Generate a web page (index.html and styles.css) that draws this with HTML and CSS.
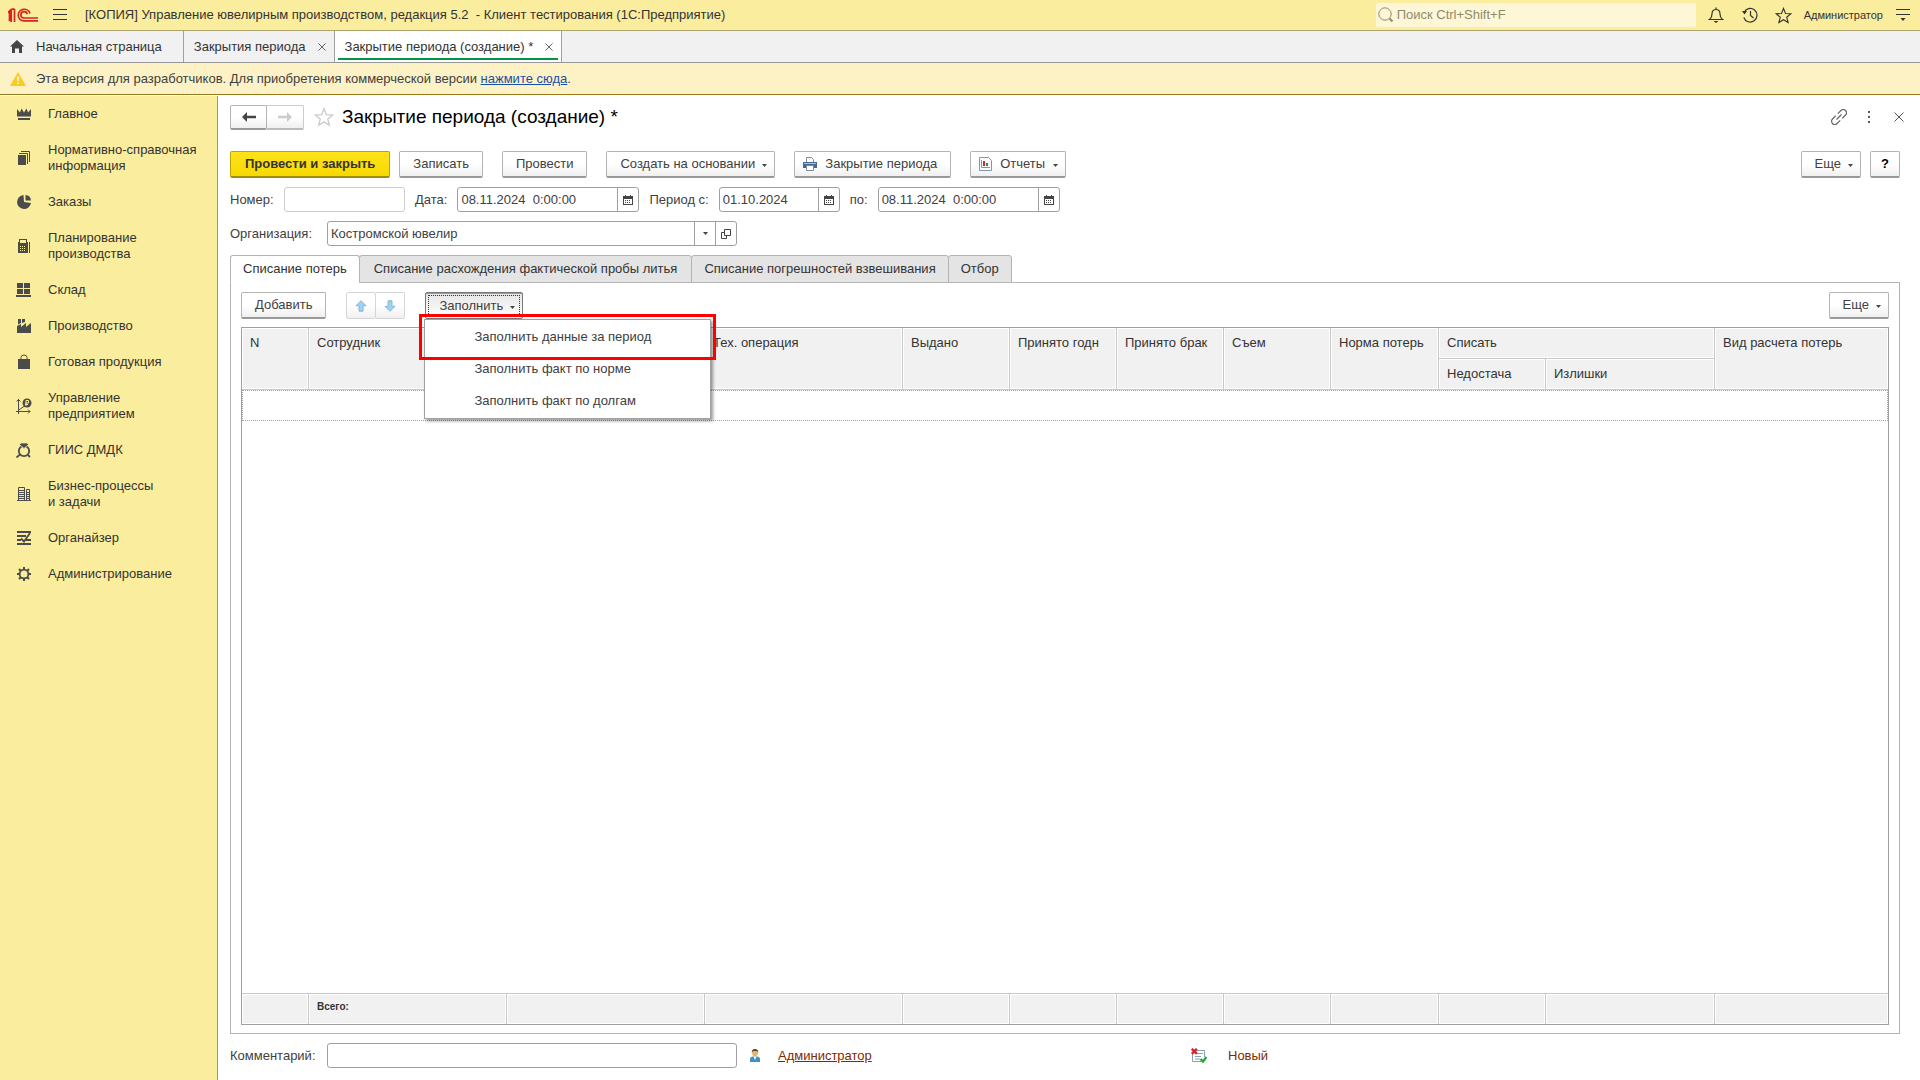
FILE: index.html
```html
<!DOCTYPE html>
<html lang="ru">
<head>
<meta charset="utf-8">
<title>Закрытие периода (создание)</title>
<meta name="viewport" content="width=device-width, initial-scale=1">
<link rel="stylesheet" href="styles.css">
</head>
<body>
<svg class="sprite" aria-hidden="true">
  <symbol id="calendar" viewBox="0 0 10 10"><path fill="#444" fill-rule="evenodd" d="M0 1h2V0h1v1h4V0h1v1h2v9H0zM1 4v5h8V4z"/><path fill="#444" d="M2 5h1v1H2zM4 5h1v1H4zM6 5h1v1H6zM2 7h1v1H2zM4 7h1v1H4zM6 7h1v1H6z"/></symbol>
  <symbol id="caret" viewBox="0 0 5 3"><path fill="#444" d="M0 0h5L2.500 3z"/></symbol>
  <symbol id="star" viewBox="0 0 18 18"><path fill="none" stroke="currentColor" stroke-width="1.200" d="M9 1.500l2.100 5.400 5.700.3-4.400 3.700 1.500 5.600L9 13.400l-4.900 3.100 1.500-5.600L1.200 7.200l5.700-.3z"/></symbol>
  <symbol id="close" viewBox="0 0 10 10"><path fill="none" stroke="currentColor" d="M.5.5l9 9M9.500.5l-9 9"/></symbol>
</svg>
<div class="app">
  <header class="titlebar">
    <svg class="logo" viewBox="0 0 30 14"><g fill="none" stroke="#d9231f" stroke-width="1.700"><path d="M0 4.500L3.600 1.200M3.200 1v13M0 4.300h1.500v9M6.500 1v13M3.600 1.200h3"/><path d="M22 5.500A6 5.800 0 1 0 16 12.900H30"/><path d="M19.200 6.200A3.200 3.200 0 1 0 16 10H30"/></g></svg>
    <button class="icon-btn" aria-label="Главное меню"><svg width="14" height="12" viewBox="0 0 14 12"><path stroke="#333" d="M0 .5h14M0 5.500h14M0 10.500h14"/></svg></button>
    <span class="app-title">[КОПИЯ] Управление ювелирным производством, редакция 5.2 &nbsp;- Клиент тестирования (1С:Предприятие)</span>
    <label class="search">
      <svg width="16" height="16" viewBox="0 0 16 16"><g fill="none" stroke="#8f8a6c"><circle cx="7" cy="7" r="6.200"/><path stroke-width="2" d="M11.500 11.500l3 3"/></g></svg>
      <input type="text" placeholder="Поиск Ctrl+Shift+F" aria-label="Поиск">
    </label>
    <button class="icon-btn" aria-label="Уведомления"><svg width="16" height="16" viewBox="0 0 16 16"><path fill="none" stroke="#333" stroke-width="1.200" d="M1.500 12.500c2-1.500 2.500-3 2.500-5.500C4 4 5.500 2.500 8 2.500S12 4 12 7c0 2.500.5 4 2.500 5.500zM8 2.500V.5"/><path fill="#333" d="M5.500 14h5L8 16z"/></svg></button>
    <button class="icon-btn" aria-label="История"><svg width="16" height="16" viewBox="0 0 16 16"><path fill="none" stroke="#333" stroke-width="1.200" d="M2 5.500A6.800 6.800 0 1 1 1.800 10.500M8.500 4v4.500l3 2.500"/><path fill="#333" d="M0 4h5L2.500 7.500z"/></svg></button>
    <button class="icon-btn" aria-label="Избранное"><svg width="17" height="17"><use href="#star"/></svg></button>
    <a class="user" href="#">Администратор</a>
    <button class="icon-btn" aria-label="Сервис"><svg width="14" height="12" viewBox="0 0 14 12"><path stroke="#333" d="M0 .5h14M0 5.500h14"/><path fill="#333" d="M4.500 9h5L7 12z"/></svg></button>
  </header>

  <nav class="windows">
    <div class="window home"><svg width="14" height="13" viewBox="0 0 14 13"><path fill="#444" d="M7 0l7 6.500h-2V13H9V8.500H5V13H2V6.500H0z"/></svg><a href="#">Начальная страница</a></div>
    <div class="window"><a href="#">Закрытия периода</a><button class="tab-close" aria-label="Закрыть"><svg width="8" height="8"><use href="#close"/></svg></button></div>
    <div class="window active"><a href="#">Закрытие периода (создание) *</a><button class="tab-close" aria-label="Закрыть"><svg width="8" height="8"><use href="#close"/></svg></button></div>
  </nav>

  <div class="notice">
    <svg width="16" height="14" viewBox="0 0 16 14"><path fill="#fbcb1e" d="M8 0l8 14H0z"/><path stroke="#fff" stroke-width="1.600" d="M8 4.500v4.500M8 10.500v1.600"/></svg>
    <span>Эта версия для разработчиков. Для приобретения коммерческой версии <a href="#">нажмите сюда</a>.</span>
  </div>

  <div class="body">
    <nav class="sidebar">
      <a href="#"><svg viewBox="0 0 16 16"><path fill="#4b4b4b" d="M1 3l3 3.500L5.500 2.500 8 6.500l2.500-4L12 6.500 15 3v7.500H1zM2 12h12v2H2z"/></svg>Главное</a>
      <a href="#"><svg viewBox="0 0 16 16"><path fill="#4b4b4b" d="M2 5h8v10H2z"/><path fill="none" stroke="#4b4b4b" d="M3 3.500h8.500V14M5 1.500h8.500V12"/></svg>Нормативно-справочная<br>информация</a>
      <a href="#"><svg viewBox="0 0 16 16"><path fill="#4b4b4b" d="M7.500 1A7 7 0 1 0 15 9L8 8zM9.500 1v5.500H15A6 6 0 0 0 9.500 1z"/></svg>Заказы</a>
      <a href="#"><svg viewBox="0 0 16 16"><path fill="#4b4b4b" fill-rule="evenodd" d="M3 1h8v3h1v11H2V4h1zM4 2v3h6V2zM4 8v1h1V8zM6 8v1h1V8zM8 8v1h1V8zM4 10v1h1v-1zM6 10v1h1v-1zM8 10v1h1v-1zM4 12v1h1v-1zM6 12v1h1v-1zM8 12v1h1v-1zM13 4h1v11h-1z"/></svg>Планирование<br>производства</a>
      <a href="#"><svg viewBox="0 0 16 16"><path fill="#4b4b4b" d="M1 1h6v5H1zM8 1h6v5H8zM1 7h6v5H1zM8 7h6v5H8zM0 13h15v2H0z"/></svg>Склад</a>
      <a href="#"><svg viewBox="0 0 16 16"><path fill="#4b4b4b" d="M1 8l4-2v3l5-4v4l5-4v10H1zM2 1h3v4L2 6.500zM6 1h3v3L6 5z"/></svg>Производство</a>
      <a href="#"><svg viewBox="0 0 16 16"><path fill="#4b4b4b" d="M2 5h12v10H2z"/><path fill="none" stroke="#4b4b4b" d="M5 7V3.500Q5 1 8 1t3 2.500V7"/></svg>Готовая продукция</a>
      <a href="#"><svg viewBox="0 0 16 16"><path fill="none" stroke="#4b4b4b" d="M2.500 16V1M.5 3.500l2-2 2 2M0 13.500h14M12 11.500l2 2-2 2M3 12l4-3 2-1"/><circle cx="11" cy="5" r="4.500" fill="#4b4b4b"/><path fill="none" stroke="#fbed9e" d="M10 8V2.500h2.500v2.500H9M9 6.500h3"/></svg>Управление<br>предприятием</a>
      <a href="#"><svg viewBox="0 0 16 16"><circle cx="8" cy="9" r="5.200" fill="none" stroke="#4b4b4b" stroke-width="1.800"/><path fill="#4b4b4b" stroke="#fbed9e" stroke-width=".7" d="M5 1h6l1.500 1.500L8 6.500 3.500 2.500z"/><path stroke="#4b4b4b" stroke-width="1.800" d="M4 12.500l-3.500 3M12 13l2 2"/></svg>ГИИС ДМДК</a>
      <a href="#"><svg viewBox="0 0 16 16"><path fill="none" stroke="#4b4b4b" d="M1 14.500h14M2.500 14V1.500h6V14M2 4.500h6M2 6.500h6M2 8.500h6M2 10.500h6M2 12.500h6M10.500 14V3.500h3V14M10 6.500h4M10 8.500h4M10 10.500h4M10 12.500h4"/></svg>Бизнес-процессы<br>и задачи</a>
      <a href="#"><svg viewBox="0 0 16 16"><path fill="none" stroke="#4b4b4b" stroke-width="2" d="M1 2h14M1 6h9M1 10h4M10 10h5M1 14h14"/><path fill="none" stroke="#4b4b4b" stroke-width="1.800" d="M14 3L8 11.500 5 8.500"/></svg>Органайзер</a>
      <a href="#"><svg viewBox="0 0 16 16"><circle cx="8" cy="8" r="4.400" fill="none" stroke="#4b4b4b" stroke-width="1.800"/><path stroke="#4b4b4b" stroke-width="2" d="M8 1v2.500M8 12.500V15M1 8h2.500M12.500 8H15M3 3l2 2M11 11l2 2M13 3l-2 2M5 11l-2 2"/></svg>Администрирование</a>
    </nav>

    <main class="form">
      <div class="form-head">
        <div class="split">
          <button class="btn" aria-label="Назад"><svg width="14" height="10" viewBox="0 0 14 10"><path fill="#444" d="M0 5l5-5v3.800h9v2.400H5V10z"/></svg></button>
          <button class="btn muted" aria-label="Вперед"><svg width="14" height="10" viewBox="0 0 14 10"><path fill="#ccc" d="M14 5L9 0v3.800H0v2.400h9V10z"/></svg></button>
        </div>
        <button class="icon-btn fav" aria-label="В избранное"><svg width="20" height="20"><use href="#star"/></svg></button>
        <h1>Закрытие периода (создание) *</h1>
        <div class="head-tools">
          <button class="icon-btn" aria-label="Ссылка"><svg width="16" height="16" viewBox="0 0 16 16"><g fill="none" stroke="#666" stroke-width="1.200" transform="rotate(-45 8 8)"><path d="M6.500 4.800H2A3.200 3.200 0 0 0 2 11.200h4.500M9.500 4.800H14A3.200 3.200 0 0 1 14 11.200H9.500M4.500 8h7"/></g></svg></button>
          <button class="icon-btn" aria-label="Ещё действия"><svg width="16" height="12" viewBox="0 0 16 12"><path fill="#555" d="M7 0h2v2H7zM7 5h2v2H7zM7 10h2v2H7z"/></svg></button>
          <button class="icon-btn" aria-label="Закрыть форму"><svg width="10" height="10"><use href="#close"/></svg></button>
        </div>
      </div>

      <div class="commands">
        <button class="btn primary">Провести и закрыть</button>
        <button class="btn">Записать</button>
        <button class="btn apart">Провести</button>
        <button class="btn apart drop">Создать на основании<svg class="caret"><use href="#caret"/></svg></button>
        <button class="btn apart pic"><svg width="14" height="14" viewBox="0 0 14 14"><path fill="#fff" stroke="#7d8b99" d="M3.500 5V.5h5l2 2V5"/><path fill="#3f6a94" d="M0 5h14v6H0z"/><path fill="#fff" stroke="#7d8b99" d="M3.500 8.500h7v5h-7z"/><path stroke="#a9c4dd" d="M1 6.500h12"/></svg>Закрытие периода</button>
        <button class="btn apart pic drop"><svg width="13" height="14" viewBox="0 0 13 14"><path fill="#fff" stroke="#8294a5" d="M.5.5h9l3 3v10H.5z"/><path fill="#d22" d="M4 4h2v5H4z"/><path fill="#2a9a3c" d="M7 6h2v3H7z"/><path fill="none" stroke="#8294a5" d="M2.500 3v7.500H11"/></svg>Отчеты<svg class="caret"><use href="#caret"/></svg></button>
        <button class="btn push drop">Еще<svg class="caret"><use href="#caret"/></svg></button>
        <button class="btn help">?</button>
      </div>

      <div class="fields">
        <label for="num" class="lbl-short">Номер:</label>
        <div class="box soft w-num"><input id="num" type="text"></div>
        <label for="date">Дата:</label>
        <div class="box w-date"><input id="date" type="text" value="08.11.2024  0:00:00"><button aria-label="Календарь"><svg width="10" height="10"><use href="#calendar"/></svg></button></div>
        <label for="from">Период с:</label>
        <div class="box w-num"><input id="from" type="text" value="01.10.2024"><button aria-label="Календарь"><svg width="10" height="10"><use href="#calendar"/></svg></button></div>
        <label for="to">по:</label>
        <div class="box w-date"><input id="to" type="text" value="08.11.2024  0:00:00"><button aria-label="Календарь"><svg width="10" height="10"><use href="#calendar"/></svg></button></div>
      </div>

      <div class="fields">
        <label for="org" class="lbl-long">Организация:</label>
        <div class="box w-wide">
          <select id="org"><option>Костромской ювелир</option></select>
          <span class="select-caret"><svg class="caret"><use href="#caret"/></svg></span>
          <button aria-label="Открыть"><svg width="10" height="10" viewBox="0 0 10 10"><path fill="none" stroke="#444" d="M3.500.5h6v6h-6zM3 3.500H.5v6h5V7"/></svg></button>
        </div>
      </div>

      <div class="tabs" role="tablist">
        <button role="tab" aria-selected="true">Списание потерь</button>
        <button role="tab" class="roomy">Списание расхождения фактической пробы литья</button>
        <button role="tab">Списание погрешностей взвешивания</button>
        <button role="tab">Отбор</button>
      </div>

      <section class="panel">
        <div class="toolbar">
          <button class="btn">Добавить</button>
          <div class="split light">
            <button class="btn" aria-label="Вверх"><svg width="12" height="12" viewBox="0 0 12 12"><path fill="#9fd3f3" stroke="#83b6d6" d="M6 .7l5 5H8v5.500H4V5.700H1z"/></svg></button>
            <button class="btn" aria-label="Вниз"><svg width="12" height="12" viewBox="0 0 12 12"><path fill="#9fd3f3" stroke="#83b6d6" d="M6 11.300l5-5H8V.8H4v5.500H1z"/></svg></button>
          </div>
          <div class="menu-host">
            <button class="btn drop pressed">Заполнить<svg class="caret"><use href="#caret"/></svg></button>
            <div class="menu">
              <button>Заполнить данные за период</button>
              <button>Заполнить факт по норме</button>
              <button>Заполнить факт по долгам</button>
              <div class="marker"></div>
            </div>
          </div>
          <button class="btn push drop">Еще<svg class="caret"><use href="#caret"/></svg></button>
        </div>

        <div class="grid">
          <table>
            <colgroup><col class="c-n"><col class="c-text"><col class="c-text"><col class="c-text"><col class="c-num"><col class="c-num"><col class="c-num"><col class="c-num"><col class="c-norm"><col class="c-num"><col class="c-over"><col></colgroup>
            <thead>
              <tr><th rowspan="2">N</th><th rowspan="2">Сотрудник</th><th rowspan="2"></th><th rowspan="2">Тех. операция</th><th rowspan="2">Выдано</th><th rowspan="2">Принято годн</th><th rowspan="2">Принято брак</th><th rowspan="2">Съем</th><th rowspan="2">Норма потерь</th><th colspan="2">Списать</th><th rowspan="2">Вид расчета потерь</th></tr>
              <tr><th>Недостача</th><th>Излишки</th></tr>
            </thead>
            <tbody>
              <tr class="current"><td colspan="12"></td></tr>
              <tr class="filler"><td colspan="12"></td></tr>
            </tbody>
            <tfoot>
              <tr><td></td><td>Всего:</td><td></td><td></td><td></td><td></td><td></td><td></td><td></td><td></td><td></td><td></td></tr>
            </tfoot>
          </table>
        </div>
      </section>

      <footer class="foot">
        <div class="foot-left">
          <label for="comment" class="lbl-long">Комментарий:</label>
          <div class="box w-wide"><input id="comment" type="text"></div>
          <svg class="person" width="10" height="13" viewBox="0 0 10 13"><path fill="#3b93c5" d="M0 13V10q0-2 3-2.500h4q3 .5 3 2.500v3z"/><path fill="#fff" d="M3.500 7.500h3L5 11z"/><ellipse cx="5" cy="4" rx="2.800" ry="3.600" fill="#e7b36a"/><path fill="#5d4326" d="M1.800 4Q1.500 0 5 0t3.200 4L7 2H3z"/></svg>
          <a href="#">Администратор</a>
        </div>
        <div class="foot-right">
          <svg width="16" height="15" viewBox="0 0 16 15"><path fill="#fff" stroke="#8b9db0" d="M1.500 6v7.500h9M5 2.500h8.500V9"/><path stroke="#8b9db0" d="M6 5.500h6M4 8.500h6M4 11h5"/><path stroke="#d8232a" stroke-width="2.400" d="M.8.800l5 5M5.800.8l-5 5"/><path fill="none" stroke="#27a83a" stroke-width="2.400" d="M9.500 11l2.500 2.500L15.500 9"/></svg>
          <span>Новый</span>
        </div>
      </footer>
    </main>
  </div>
</div>
</body>
</html>
```
FILE: styles.css
```css
* { box-sizing: border-box; }
body {
  margin: 0;
  font: 13px/16px "Liberation Sans", Arial, sans-serif;
  color: #404040;
  background: #fff;
}
button, input, select { font: inherit; color: inherit; margin: 0; }
button { cursor: pointer; }
a { color: inherit; text-decoration: none; }
svg { flex: none; display: block; }
.sprite { position: absolute; width: 0; height: 0; }
.app { display: flex; flex-direction: column; height: 100vh; min-height: 640px; }

.icon-btn {
  display: flex; align-items: center; justify-content: center;
  border: 0; background: none; padding: 0; color: #333;
}

/* Title bar */
.titlebar {
  display: flex; align-items: center; flex: none;
  height: 31px; padding: 0 10px 0 8px;
  background: #fbed9e; border-bottom: 1px solid #aba36c;
}
.logo { width: 30px; height: 14px; margin-right: 15px; }
.app-title { margin-left: 18px; color: #333; white-space: nowrap; }
.search {
  display: flex; align-items: center; gap: 3px;
  width: 320px; height: 24px; margin: 0 12px 0 auto; padding: 0 2px;
  background: #fdf7d8; border-radius: 2px;
}
.search input { flex: 1; border: 0; padding: 0; background: none; outline: 0; }
.search input::placeholder { color: #8f8a6c; opacity: 1; }
.titlebar .search ~ .icon-btn { width: 16px; margin-right: 18px; }
.user { font-size: 11px; color: #333; margin: 0 13px 0 -6px; }
.titlebar .icon-btn:last-child { width: 14px; margin-right: 0; }

/* Open windows */
.windows {
  display: flex; flex: none; height: 32px;
  background: #f1f1f1; border-bottom: 1px solid #969696;
}
.window {
  display: flex; align-items: center; gap: 12px;
  padding: 0 8px 0 10px; border-right: 1px solid #a0a0a0; color: #333;
}
.home { padding-right: 21px; }
.active { background: #fff; box-shadow: inset 3px 0 #fff, inset -3px 0 #fff, inset 0 -2px #fff, inset 0 -4px #009646; }
.tab-close { border: 0; padding: 0; background: none; color: #444; }

.notice {
  display: flex; align-items: center; flex: none; gap: 10px;
  height: 32px; padding: 0 10px;
  background: #fdf2c5; border-bottom: 1px solid #967818;
}
.notice a { color: #1a4fa8; text-decoration: underline; }

.body { display: flex; flex: 1; min-height: 0; padding-top: 1px; }

/* Sections */
.sidebar { flex: none; width: 218px; background: #fbed9e; border-right: 1px solid #a39868; }
.sidebar a { position: relative; display: block; padding: 10px 8px 10px 48px; color: #333; }
.sidebar svg { position: absolute; left: 16px; top: calc(50% - 8px); width: 16px; height: 16px; }

/* Form */
.form { display: flex; flex: 1; flex-direction: column; min-width: 0; padding: 9px 20px 12px 12px; }
.form-head { display: flex; align-items: center; height: 24px; margin-bottom: 22px; }
.form-head h1 { margin: 0; font-size: 19px; line-height: 24px; font-weight: 400; color: #000; white-space: nowrap; }
.fav { margin: 0 8px 0 10px; color: #ccc; }
.head-tools { display: flex; gap: 14px; margin: 0 -7px 0 auto; align-items: center; }
.head-tools .icon-btn { width: 16px; color: #555; }

.btn {
  display: flex; align-items: center; justify-content: center; flex: none;
  height: 27px; padding: 0 13px; white-space: nowrap;
  background: linear-gradient(#fff 50%, #f0f0f0);
  border: 1px solid #b3b3b3; border-bottom: 2px solid #999; border-radius: 2px;
}
.primary {
  padding: 0 14px; font-weight: 700; color: #333;
  background: linear-gradient(#ffe31a, #f7d800);
  border-color: #bfa200; border-bottom-color: #a48b00;
}
.drop { gap: 7px; padding-right: 7px; }
.pic { padding-left: 8px; gap: 8px; }
.caret { width: 5px; height: 3px; margin-top: 3px; }
.apart { margin-left: 10px; }
.push { margin-left: auto; }
.help { width: 30px; padding: 0; font-weight: 700; color: #000; }
.split { display: flex; }
.split .btn { width: 37px; height: 25px; padding: 0; }
.split .btn + .btn { border-left: 0; border-radius: 0 2px 2px 0; }
.muted { border-color: #ccc; border-bottom-color: #bbb; }
.light .btn { width: 30px; height: 27px; border: 1px solid #d6d6d6; }
.light .btn + .btn { width: 29px; }

.commands { display: flex; gap: 9px; margin-bottom: 9px; }

.fields { display: flex; align-items: center; gap: 10px; margin-bottom: 9px; }
.lbl-short { width: 44px; }
.lbl-long { width: 87px; }
.box {
  position: relative; display: flex; height: 25px;
  border: 1px solid #a0a0a0; border-radius: 3px; background: #fff;
}
.soft { border-color: #ccc; }
.box input, .box select {
  flex: 1; min-width: 0; width: 0; border: 0; padding: 0 3px; background: none; outline: 0;
}
.box select { appearance: none; }
.box button {
  display: flex; align-items: center; justify-content: center;
  width: 21px; padding: 0; border: 0; border-left: 1px solid #a0a0a0; background: none;
}
.select-caret {
  position: absolute; right: 21px; top: 0; bottom: 0; width: 21px;
  display: flex; align-items: center; justify-content: center;
  border-left: 1px solid #a0a0a0; pointer-events: none;
}
.select-caret .caret { margin-top: 0; }
.w-num { width: 121px; }
.w-date { width: 182px; }
.w-wide { width: 410px; }

/* Pages */
.tabs { display: flex; position: relative; z-index: 1; margin-bottom: -1px; }
.tabs button {
  height: 28px; padding: 0 12px; margin-right: -1px; white-space: nowrap; color: #333;
  background: #e4e4e4; border: 1px solid #b3b3b3; border-radius: 3px 3px 0 0;
}
.tabs .roomy { padding: 0 14px; }
.tabs button[aria-selected="true"] { background: #fff; border-bottom-color: #fff; }
.panel {
  display: flex; flex-direction: column; flex: 1; min-height: 0;
  padding: 9px 10px 8px; border: 1px solid #b3b3b3;
}
.toolbar { display: flex; gap: 20px; margin-bottom: 8px; }
.menu-host { position: relative; }
.pressed {
  background: linear-gradient(#e6e6e6, #fff);
  border: 1px solid #777; box-shadow: inset 0 1px #999;
  outline: 1px dotted #333; outline-offset: -4px;
}
.menu {
  position: absolute; z-index: 2; left: -1px; top: 27px; width: 287px;
  padding: 1px 0; background: #fff; border: 1px solid #a0a0a0;
  box-shadow: 2px 2px 3px rgba(0, 0, 0, .4);
}
.menu button {
  display: block; width: 100%; height: 32px; padding: 0 0 0 49px;
  border: 0; background: none; text-align: left;
}
.marker {
  position: absolute; left: -6px; right: -6px; top: -6px; height: 46px;
  border: 3px solid #f00; pointer-events: none;
}

.grid { flex: 1; min-height: 0; border: 1px solid #a0a0a0; }
table { width: 100%; height: 100%; table-layout: fixed; border-collapse: separate; border-spacing: 0; }
.c-n { width: 67px; }
.c-text { width: 198px; }
.c-num { width: 107px; }
.c-norm { width: 108px; }
.c-over { width: 169px; }
th, tfoot td {
  height: 31px; padding: 7px 8px; text-align: left; vertical-align: top; font-weight: 400;
  color: #333; background: #f1f1f1; white-space: nowrap; overflow: hidden;
  border-right: 1px solid #c8c8c8; border-bottom: 1px solid #c8c8c8;
  box-shadow: inset 0 0 0 1px #fff;
}
tfoot td { border-top: 1px solid #c8c8c8; border-bottom: 0; font-size: 10px; font-weight: 700; padding: 5px 8px; }
tr > :last-child { border-right: 0; }
thead tr:last-child > :last-child { border-right: 1px solid #c8c8c8; }
tbody td { padding: 0; }
.current td { height: 31px; border: 1px dotted #a0a0a0; }

.foot { display: flex; align-items: center; margin-top: 9px; color: #404040; }
.foot-left { display: flex; align-items: center; gap: 10px; width: 58%; max-width: 961px; }
.foot-right { display: flex; align-items: center; gap: 21px; color: #802a00; }
.foot a { color: #802a00; text-decoration: underline; }
.person { margin: 0 8px 0 3px; }
```
